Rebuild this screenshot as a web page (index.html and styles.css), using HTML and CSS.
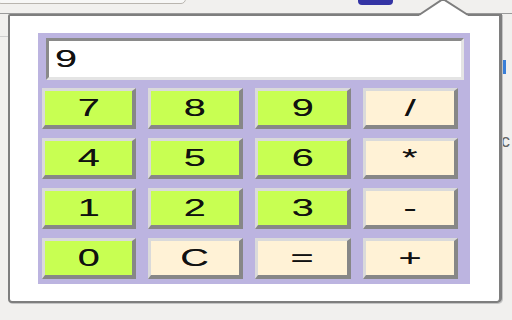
FILE: index.html
```
<!DOCTYPE html>
<html>
<head>
<meta charset="utf-8">
<link rel="stylesheet" href="styles.css">
</head>
<body>
<div class="addr"></div>
<div class="tbline"></div>
<div class="sideline"></div>
<div class="badge"></div>
<div class="rblue"></div>
<span class="rc">c</span>
<div class="popup">
  <div class="calc">
    <div class="display"><span class="lbl">9</span></div>
    <div class="keys">
      <div class="key num"><span class="lbl">7</span></div>
      <div class="key num"><span class="lbl">8</span></div>
      <div class="key num"><span class="lbl">9</span></div>
      <div class="key op"><span class="lbl">/</span></div>
      <div class="key num"><span class="lbl">4</span></div>
      <div class="key num"><span class="lbl">5</span></div>
      <div class="key num"><span class="lbl">6</span></div>
      <div class="key op"><span class="lbl">*</span></div>
      <div class="key num"><span class="lbl">1</span></div>
      <div class="key num"><span class="lbl">2</span></div>
      <div class="key num"><span class="lbl">3</span></div>
      <div class="key op"><span class="lbl">-</span></div>
      <div class="key num"><span class="lbl">0</span></div>
      <div class="key op"><span class="lbl">C</span></div>
      <div class="key op"><span class="lbl">=</span></div>
      <div class="key op"><span class="lbl">+</span></div>
    </div>
  </div>
</div>
<svg class="arrow" width="58" height="20" viewBox="0 0 58 20">
  <polygon points="4,17 28,1 53,17 53,19.5 4,19.5" fill="#ffffff"/>
  <polyline points="4,17 28,1 53,17" fill="none" stroke="#7e7e7e" stroke-width="2"/>
</svg>
</body>
</html>
```
FILE: styles.css
```
html, body {
  margin: 0;
  padding: 0;
}
body {
  width: 512px;
  height: 320px;
  overflow: hidden;
  position: relative;
  background: #f1f0ee;
  font-family: "Liberation Sans", Arial, sans-serif;
}
.addr {
  position: absolute;
  left: -4px;
  top: -10px;
  width: 188px;
  height: 12px;
  border: 1px solid #b9b5af;
  border-radius: 0 0 5px 5px;
  background: #f7f7f6;
}
.tbline {
  position: absolute;
  left: 0;
  top: 13px;
  width: 512px;
  height: 1px;
  background: #9a9a9a;
}
.sideline {
  position: absolute;
  left: 0;
  top: 36px;
  width: 10px;
  height: 1px;
  background: #cfcfcf;
}
.badge {
  position: absolute;
  left: 358px;
  top: -6px;
  width: 35px;
  height: 11px;
  border-radius: 4px;
  background: #3434a4;
}
.rblue {
  position: absolute;
  left: 503px;
  top: 60px;
  width: 3px;
  height: 14px;
  background: #3a7fd8;
}
.rc {
  position: absolute;
  left: 501px;
  top: 131px;
  font-size: 18px;
  color: #666;
}
.popup {
  position: absolute;
  left: 8px;
  top: 14px;
  width: 494px;
  height: 289px;
  box-sizing: border-box;
  background: #ffffff;
  border: 2px solid #7e7e7e;
  border-right-width: 3px;
  border-radius: 2px 0 5px 4px;
  box-shadow: 1px 1px 0 #c4c4c4;
  padding: 17px 0 0 28px;
}
.arrow {
  position: absolute;
  left: 415px;
  top: -2px;
}
.calc {
  width: 432px;
  height: 251px;
  box-sizing: border-box;
  background: #bcb4e0;
  padding: 5px 0 0 4px;
}
.lbl {
  display: inline-block;
  transform: scaleX(1.65);
  text-shadow: 0 0 0.5px rgba(0, 0, 0, 0.6);
}
.display {
  margin-left: 4px;
  width: 418px;
  height: 42px;
  box-sizing: border-box;
  background: #ffffff;
  border-style: solid;
  border-width: 3px;
  border-color: #8a8a8a #e4e4e4 #e4e4e4 #8a8a8a;
  padding-left: 6px;
  font-size: 24px;
  line-height: 36px;
  color: #111;
  margin-bottom: 8px;
}
.display .lbl {
  transform-origin: left center;
}
.keys {
  display: grid;
  grid-template-columns: 94px 95px 96px 95px;
  grid-auto-rows: 41px;
  column-gap: 12px;
  row-gap: 9px;
}
.key {
  box-sizing: border-box;
  display: flex;
  align-items: center;
  justify-content: center;
  border-style: solid;
  border-width: 3px 4px 4px 3px;
  border-color: #dadada #878787 #878787 #dadada;
  font-size: 24px;
  color: #111;
}
.num {
  background: #c8ff52;
}
.op {
  background: #fff2d6;
}
```
